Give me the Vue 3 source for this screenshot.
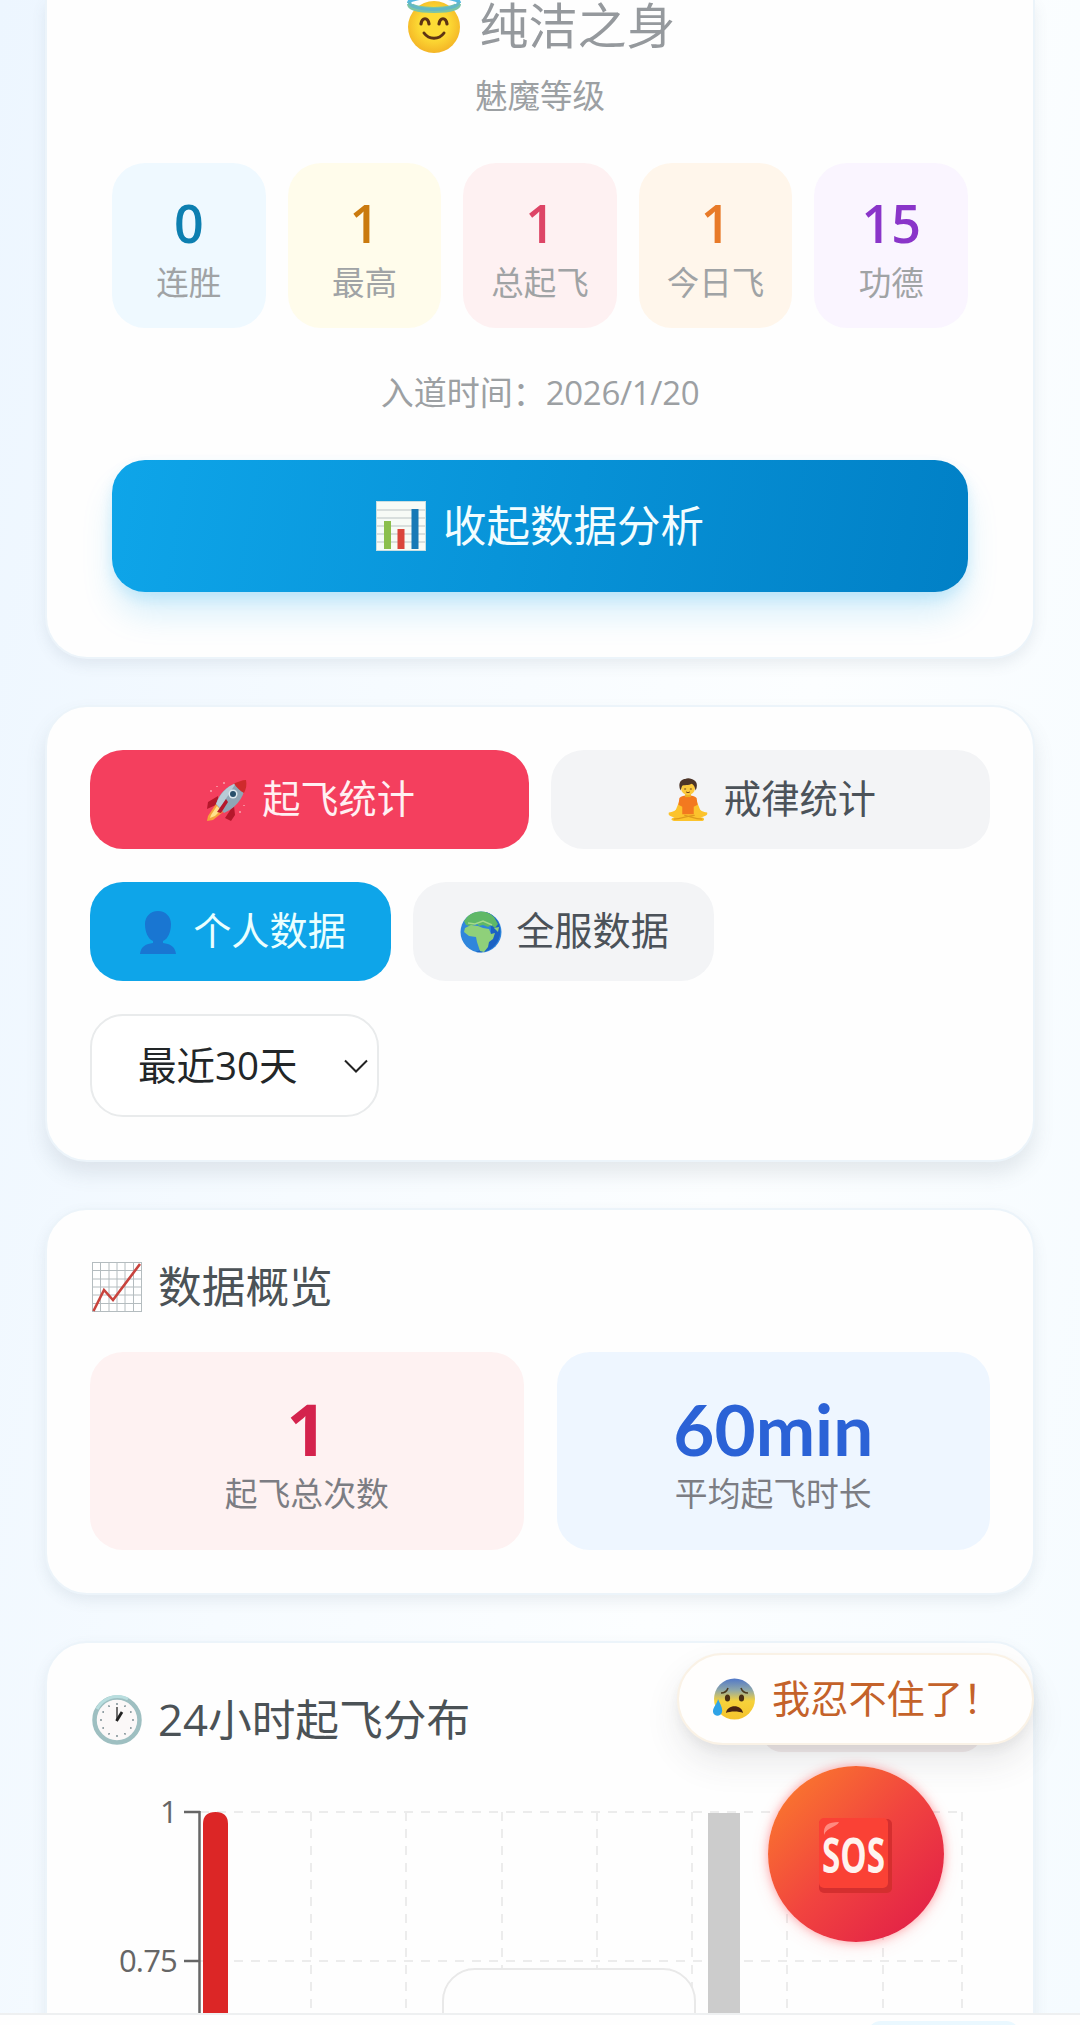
<!-- personal statistics page: level card, filters, overview and hourly chart -->

<script setup>
    import { ref } from 'vue';

    const stats = [
        { value: '0', label: '连胜', tone: 'sky' },
        { value: '1', label: '最高', tone: 'yellow' },
        { value: '1', label: '总起飞', tone: 'rose' },
        { value: '1', label: '今日飞', tone: 'orange' },
        { value: '15', label: '功德', tone: 'purple' }
    ];

    const statType = ref('fly');
    const scope = ref('mine');

    // vertical grid lines, relative to the left side of the chart
    const gridX = [221, 316, 412, 507, 602, 697, 793, 872];
    const chartTicks = [
        { label: '1', y: 20 },
        { label: '0.75', y: 169 }
    ];
    const clockDots = Array.from({ length: 12 }, (_, i) => i * 30);
</script>

<template>
    <div class="page">
        <main class="content">
            <section class="card levelCard">
                <h1 class="level">
                    <svg class="halo" viewBox="0 0 54 56">
                        <defs>
                            <radialGradient id="face" cx="50%" cy="45%" r="55%">
                                <stop offset="0.5" stop-color="#fddc35" />
                                <stop offset="1" stop-color="#f4b526" />
                            </radialGradient>
                        </defs>
                        <circle cx="27" cy="29" r="26" fill="url(#face)" />
                        <path d="M3 6C3 14 51 14 51 6" fill="none" stroke="#7cc4a4" stroke-width="6" />
                        <path d="M2 5C2 -3 52 -3 52 5" fill="none" stroke="#55b9e3" stroke-width="4" />
                        <path d="M2 4C3 14 51 14 52 4" fill="none" stroke="#62b8c6" stroke-width="3" />
                        <path d="M14 26c1-7 7-7 8 0M32 26c1-7 7-7 8 0" fill="none" stroke="#5d3414" stroke-width="3.2" stroke-linecap="round" />
                        <path d="M17 35c5 7 15 7 20 0" fill="none" stroke="#5d3414" stroke-width="3" stroke-linecap="round" />
                    </svg>
                    <span>纯洁之身</span>
                </h1>
                <p class="levelLabel">魅魔等级</p>
                <div class="stats">
                    <div v-for="item in stats" :key="item.label" class="stat" :class="item.tone">
                        <b>{{ item.value }}</b>
                        <span>{{ item.label }}</span>
                    </div>
                </div>
                <p class="joined">入道时间：<span class="date">2026/1/20</span></p>
                <button class="toggle">
                    <svg class="barIcon" viewBox="0 0 50 50">
                        <rect width="50" height="50" fill="#f7fbf6" />
                        <path d="M1 9h48M1 17h48M1 25h48M1 33h48M1 41h48" stroke="#b9c4c4" stroke-width="1.2" />
                        <rect x="0.5" y="0.5" width="49" height="49" fill="none" stroke="#c9dfe2" />
                        <rect x="8" y="20" width="7" height="28" fill="#8cbf4b" />
                        <rect x="21.500" y="28" width="7" height="20" fill="#da453b" />
                        <rect x="35.500" y="8" width="7" height="40" fill="#1779b6" />
                    </svg>
                    <span>收起数据分析</span>
                </button>
            </section>

            <section class="card filters">
                <div class="row types">
                    <button class="tab" :class="{ flyActive: statType === 'fly' }" @click="statType = 'fly'">
                        <svg class="tabIcon" viewBox="0 0 42 42">
                            <path d="M12 17L2 23l-1 7 11-5zM25 30l-6 9 6 3 4-6-1-9z" fill="#b5172b" />
                            <path d="M10 25L2 37l-1 5 6-1 10-8z" fill="#f6a23c" />
                            <path d="M11 27L5 36l-1 3 5-2 6-6z" fill="#ffe28a" />
                            <path d="M10 25C13 13 24 4 39 2c1 13-6 25-21 32z" fill="#8fa6b5" />
                            <path d="M10 25C14 15 20 8 30 4L14 29z" fill="#b8cbd6" />
                            <path d="M28 4.500C32 3 36 1 40 1c1 5 0 9-2 13-4-2-8-6-10-9.500z" fill="#cf2a2c" />
                            <circle cx="27" cy="15" r="4.500" fill="#dfe9ee" />
                            <circle cx="27" cy="15" r="3" fill="#29506b" />
                            <path d="M20 20l-9 13 4 1 7-11z" fill="#b5172b" />
                            <path d="M18 3v2M4 12h2M33 33h2M38 26v1M11 7v1" stroke="#f9a3ad" stroke-width="1.500" />
                        </svg>
                        <span>起飞统计</span>
                    </button>
                    <button class="tab" :class="{ flyActive: statType === 'rule' }" @click="statType = 'rule'">
                        <svg class="tabIcon" viewBox="0 0 42 46">
                            <path d="M1 36c4 0 7-2 12-7h16c5 5 8 7 12 7 1 3-2 4-7 5 5 0 5 4 1 4H8c-5 0-6-3-1-4-5-1-7-2-6-5z" fill="#fcc32c" />
                            <path d="M6 43c9 0 14-4 22-4M36 43c-8 0-13-3-19-4" fill="none" stroke="#e09a1d" stroke-width="1.200" />
                            <path d="M12 24l-4 10 3 2 6-8zM30 24l4 10-3 2-6-8z" fill="#fcc32c" />
                            <path d="M12 21c2-2 5-3 9-3s7 1 9 3l1 7-4 2v8H15v-8l-4-2z" fill="#f3791f" />
                            <rect x="18" y="14" width="6" height="6" fill="#eeb025" />
                            <circle cx="21" cy="10.500" r="7.300" fill="#fcc93c" />
                            <path d="M13 13C10 5 14 1 18 1c3-2 8 0 9 1 4 2 4 7 2 11-1-4-2-6-4-7-3 2-9 1-10 2-1 2-1 3-2 5z" fill="#4d3528" />
                            <path d="M17 11.500h2M23 11.500h2M19 14.500c1 1 3 1 4 0" stroke="#6a3d1b" stroke-width="1" fill="none" />
                        </svg>
                        <span>戒律统计</span>
                    </button>
                </div>
                <div class="row">
                    <button class="tab fixed" :class="{ scopeActive: scope === 'mine' }" @click="scope = 'mine'">
                        <svg class="tabIcon" viewBox="0 0 42 44">
                            <path d="M21 1c8 0 13 6 13 13 0 8-3 15-8 17v2c7 1 12 3 13 11H3c1-8 6-10 13-11v-2c-5-2-8-9-8-17C8 7 13 1 21 1z" fill="#1976d2" />
                        </svg>
                        <span>个人数据</span>
                    </button>
                    <button class="tab fixed" :class="{ scopeActive: scope === 'all' }" @click="scope = 'all'">
                        <svg class="tabIcon" viewBox="0 0 42 42">
                            <circle cx="21" cy="21" r="20.500" fill="#2f86dc" />
                            <path d="M26 1c15 5 18 22 10 32-5 7-13 9-20 8 14-5 20-22 10-40z" fill="#1b62c4" />
                            <path d="M8 5c8-6 19-6 26 1l4 7-3 4-4-3-3 2-5-2-4 1-2-2-7 2-4-1-2-4z" fill="#5fb867" />
                            <path d="M5 17l6-3 7 1 5 2 6 1 2 5 4-1-2 6-4 3-1 5-4 5-4-1-3-9-1-5-7-1-5-4z" fill="#8fd07a" />
                            <path d="M8 12l7 1 8-3 9 4" fill="none" stroke="#a5d98a" stroke-width="1.500" />
                            <path d="M34 17l4 4 1-5z" fill="#8fd07a" />
                        </svg>
                        <span>全服数据</span>
                    </button>
                </div>
                <div class="select">
                    <span>最近<span class="num">30</span>天</span>
                    <svg class="chevron" viewBox="0 0 24 14">
                        <path d="M1 1.500l11 11 11-11" fill="none" stroke="#222" stroke-width="2" />
                    </svg>
                </div>
            </section>

            <section class="card overview">
                <h2 class="title">
                    <svg class="titleIcon" viewBox="0 0 50 50">
                        <rect x="0.5" y="0.5" width="49" height="49" fill="#fff" stroke="#b4bcbf" />
                        <path d="M8.500 1v48M17 1v48M25 1v48M33 1v48M41.500 1v48M1 8.500h48M1 17h48M1 25h48M1 33h48M1 41.500h48" stroke="#b4bcbf" stroke-width="1" />
                        <path d="M1.500 49l10.500-21 9 10L48 2" fill="none" stroke="#c8433d" stroke-width="2.600" />
                    </svg>
                    <span>数据概览</span>
                </h2>
                <div class="boxes">
                    <div class="box pink">
                        <b>1</b>
                        <span>起飞总次数</span>
                    </div>
                    <div class="box blue">
                        <b>60min</b>
                        <span>平均起飞时长</span>
                    </div>
                </div>
            </section>

            <section class="card hours">
                <h2 class="title">
                    <svg class="titleIcon" viewBox="0 0 50 50">
                        <circle cx="25" cy="25" r="22.500" fill="#fbf8f8" stroke="#9ebfc1" stroke-width="4.500" />
                        <path d="M5 14A23 23 0 0 1 36 4" fill="none" stroke="#b9dedf" stroke-width="3" />
                        <circle v-for="deg in clockDots" :key="deg" cx="25" cy="9" r="0.9" fill="#71848a" :transform="`rotate(${deg} 25 25)`" />
                        <path d="M25 26V12" stroke="#444" stroke-width="1.500" />
                        <path d="M24.500 26L30 17" stroke="#222" stroke-width="2.800" />
                    </svg>
                    <span><span class="num">24</span>小时起飞分布</span>
                </h2>
                <svg class="chart" viewBox="0 0 900 260">
                    <g stroke="#ececec" stroke-width="2" stroke-dasharray="9 8">
                        <line v-for="tick in chartTicks" :key="tick.label" x1="110" x2="872" :y1="tick.y" :y2="tick.y" />
                        <line v-for="x in gridX" :key="x" :x1="x" :x2="x" y1="20" y2="260" />
                    </g>
                    <rect x="618" y="21" width="32" height="239" fill="#ccc" />
                    <path d="M109.500 260V19" stroke="#666" stroke-width="2.500" />
                    <path d="M113 260V32q0-12 12.500-12T138 32V260z" fill="#dc2626" />
                    <g v-for="tick in chartTicks" :key="tick.y">
                        <line x1="94" x2="110" :y1="tick.y" :y2="tick.y" stroke="#666" stroke-width="2.500" />
                        <text x="87" :y="tick.y + 11" class="tickText">{{ tick.label }}</text>
                    </g>
                </svg>
                <div class="tooltip"></div>
            </section>
        </main>

        <nav class="bottomBar"><i></i></nav>

        <div class="bubbleTail"></div>
        <div class="bubble">
            <svg class="worry" viewBox="0 0 42 42">
                <defs>
                    <linearGradient id="cold" x1="0" y1="0" x2="0" y2="1">
                        <stop offset="0" stop-color="#5178c9" />
                        <stop offset="0.28" stop-color="#8ea7a9" />
                        <stop offset="0.55" stop-color="#f6d23b" />
                        <stop offset="1" stop-color="#f5c32c" />
                    </linearGradient>
                </defs>
                <circle cx="21.500" cy="21" r="20.500" fill="url(#cold)" />
                <path d="M8 15c4 0 6-2 7-5M28 10c1 3 4 5 7 5" fill="none" stroke="#4c3a1e" stroke-width="1.600" />
                <ellipse cx="14.500" cy="20" rx="2.600" ry="3.600" fill="#4a2f14" />
                <ellipse cx="28.500" cy="20" rx="2.600" ry="3.600" fill="#4a2f14" />
                <path d="M13 35c1-9 16-9 17 0-4-2-13-2-17 0z" fill="#4a2412" />
                <path d="M5 21c2 5 5 9 4 13-1 5-8 5-9 0-.500-4 4-8 5-13z" fill="#2fa3e6" />
            </svg>
            <span>我忍不住了！</span>
        </div>
        <button class="sos">
            <svg viewBox="0 0 74 76">
                <rect x="1" y="2" width="73" height="74" rx="5" fill="#d42f2f" />
                <rect x="1" y="1" width="69" height="70" rx="5" fill="#fa4135" />
                <path d="M6 18C5 8 10 5 21 5c-2 5-12 5-15 13z" fill="#ff8a80" />
                <text x="35.500" y="56" textLength="63" lengthAdjust="spacingAndGlyphs" class="sosText">SOS</text>
            </svg>
        </button>
    </div>
</template>

<style>
body {
    margin: 0;
}
</style>

<style scoped>
.page {
    position: relative;
    width: 1080px;
    height: 2025px;
    overflow: hidden;
    background: linear-gradient(100deg, #edf6ff 0%, #f6fbff 35%, #fcfeff 65%, #f5fbff 100%);
    font-family: "Open Sans", "Noto Sans CJK SC", sans-serif;
    color: #4b5563;
}

.page * {
    box-sizing: border-box;
}

h1, h2, p {
    margin: 0;
    font-weight: 400;
}

button {
    border: 0;
    padding: 0;
    font-family: inherit;
    color: inherit;
}

svg {
    display: block;
    flex: none;
}

.content {
    height: 2013px;
    padding: 0 45px;
    overflow: hidden;
    display: flex;
    flex-direction: column;
    gap: 46px;
}

.card {
    flex: none;
    background: #fefefe;
    border: 2px solid #ecf4fa;
    border-radius: 42px;
    box-shadow: 0 6px 14px rgba(80, 100, 120, 0.1);
}

/* level card */
.levelCard {
    height: 659px;
    border-top: 0;
    border-radius: 0 0 42px 42px;
    padding: 0 65px;
}

.level {
    height: 52px;
    padding-left: 3px;
    display: flex;
    justify-content: center;
    gap: 18px;
    font-size: 49px;
    line-height: 50px;
    color: #95999d;
}

.halo {
    width: 54px;
    height: 56px;
    margin-top: -2px;
}

.levelLabel {
    margin-top: 18px;
    font-size: 32.500px;
    line-height: 51px;
    text-align: center;
    color: #9ca0a3;
}

.stats {
    margin-top: 42px;
    display: grid;
    grid-template-columns: repeat(5, 1fr);
    gap: 22px;
}

.stat {
    height: 165px;
    padding-top: 27px;
    border-radius: 33px;
    display: flex;
    flex-direction: column;
    align-items: center;
}

.stat b {
    font-size: 52px;
    line-height: 66px;
    font-weight: 600;
}

.stat span {
    font-size: 32.500px;
    line-height: 48px;
    margin-top: 3px;
    color: #a0a3a5;
}

.sky { background: #eff9ff; }
.sky b { color: #0d7fb0; }
.yellow { background: #fffceb; }
.yellow b { color: #ca7a0e; }
.rose { background: #fef1f2; }
.rose b { color: #dd4566; }
.orange { background: #fff6eb; }
.orange b { color: #e87a28; }
.purple { background: #faf5ff; }
.purple b { color: #8a35c9; }

.joined {
    margin-top: 40px;
    font-size: 33px;
    line-height: 50px;
    text-align: center;
    color: #9ca0a3;
}

.date {
    letter-spacing: -0.3px;
}

.toggle {
    width: 100%;
    height: 132px;
    margin-top: 42px;
    border-radius: 33px;
    display: flex;
    align-items: center;
    justify-content: center;
    gap: 17px;
    font-size: 43.500px;
    color: #f2fdff;
    background: linear-gradient(100deg, #0ea5e9, #0180c6);
    box-shadow: 0 24px 36px -6px rgba(14, 165, 233, 0.2), 0 6px 14px rgba(14, 165, 233, 0.14);
}

.toggle span,
.tab span,
.select > span,
.bubble span {
    position: relative;
    top: -3px;
}

.barIcon {
    width: 50px;
    height: 50px;
}

/* filters */
.filters {
    height: 457px;
    padding: 43px;
    display: flex;
    flex-direction: column;
    align-items: flex-start;
    gap: 33px;
    box-shadow: 0 12px 20px rgba(80, 95, 110, 0.13);
}

.row {
    display: flex;
    gap: 22px;
}

.types {
    width: 100%;
}

.tab {
    flex: 1;
    height: 99px;
    padding-left: 2px;
    border-radius: 33px;
    display: flex;
    align-items: center;
    justify-content: center;
    gap: 14px;
    font-size: 38.200px;
    background: #f3f4f6;
    color: #4b5259;
}

.tab.fixed {
    flex: none;
    width: 301px;
}

.tabIcon {
    width: 42px;
    height: 44px;
}

.tab.flyActive {
    background: #f43f5e;
    color: #fff0f2;
}

.tab.scopeActive {
    background: #0ea5e9;
    color: #eaffff;
}

.select {
    width: 289px;
    height: 103px;
    padding: 0 9px 0 46px;
    border: 2px solid #e9ebec;
    border-radius: 33px;
    background: #fff;
    display: flex;
    align-items: center;
    justify-content: space-between;
    font-size: 38.500px;
    color: #222628;
}

.chevron {
    width: 24px;
    height: 14px;
}

/* overview */
.title {
    display: flex;
    align-items: center;
    gap: 16px;
    height: 60px;
    padding-left: 2px;
    font-size: 43.700px;
    line-height: 60px;
    color: #4b5256;
}

.title > span {
    position: relative;
    top: -1px;
}

.titleIcon {
    width: 50px;
    height: 50px;
}

.overview {
    height: 387px;
    padding: 47px 43px 42px;
}

.boxes {
    margin-top: 35px;
    display: grid;
    grid-template-columns: 1fr 1fr;
    gap: 33px;
}

.box {
    height: 198px;
    padding-top: 36px;
    border-radius: 33px;
    display: flex;
    flex-direction: column;
    align-items: center;
}

.box b {
    font-size: 71px;
    line-height: 82px;
}

.box span {
    font-size: 32.800px;
    line-height: 48px;
    color: #7c7d83;
}

.pink { background: #fef2f2; }
.pink b { color: #d4234d; }
.blue { background: #eef6ff; }
.blue b { color: #2b62d6; font-family: Lato, "Open Sans", sans-serif; }

/* hourly chart */
.hours {
    position: relative;
    height: 500px;
    padding: 47px 43px;
}

.chart {
    width: 900px;
    height: 260px;
    margin-top: 42px;
}

.tickText {
    font-size: 31px;
    fill: #666;
    text-anchor: end;
    letter-spacing: -0.8px;
}

.tooltip {
    position: absolute;
    left: 395px;
    top: 325px;
    width: 254px;
    height: 150px;
    border: 2px solid #e9e9e9;
    border-radius: 33px;
    background: #fefefe;
}

.bottomBar {
    position: relative;
    height: 12px;
    background: #fefefe;
    border-top: 2px solid #eef0f1;
}

.bottomBar i {
    position: absolute;
    right: 60px;
    top: 6px;
    width: 153px;
    height: 30px;
    border-radius: 14px;
    background: #eaf8ff;
}

/* floating help button with its bubble */
.bubble {
    position: absolute;
    left: 677px;
    top: 1653px;
    width: 357px;
    height: 92px;
    padding-left: 34px;
    border: 2px solid #faf2e6;
    border-radius: 46px;
    background: #fffefd;
    display: flex;
    align-items: center;
    gap: 17px;
    font-size: 38.200px;
    white-space: nowrap;
    color: #c4622a;
    box-shadow: 0 18px 34px rgba(60, 60, 70, 0.1), 0 6px 10px rgba(60, 60, 70, 0.06);
}

.worry {
    width: 42px;
    height: 42px;
}

.bubbleTail {
    position: absolute;
    left: 762px;
    top: 1730px;
    width: 220px;
    height: 22px;
    border-radius: 0 0 20px 20px;
    background: #f3ecec;
}

.sos {
    position: absolute;
    left: 768px;
    top: 1766px;
    width: 176px;
    height: 176px;
    border-radius: 50%;
    display: flex;
    align-items: center;
    justify-content: center;
    background: linear-gradient(135deg, #fb7c2c 5%, #f1443f 50%, #e11d48 95%);
    box-shadow: 0 0 10px rgba(255, 70, 80, 0.45), 0 4px 18px rgba(255, 90, 90, 0.15);
}

.sos svg {
    width: 74px;
    height: 76px;
    margin-top: 2px;
    margin-right: 2px;
}

.sosText {
    font-size: 49px;
    font-weight: 700;
    fill: #fff3ef;
    text-anchor: middle;
}
</style>
